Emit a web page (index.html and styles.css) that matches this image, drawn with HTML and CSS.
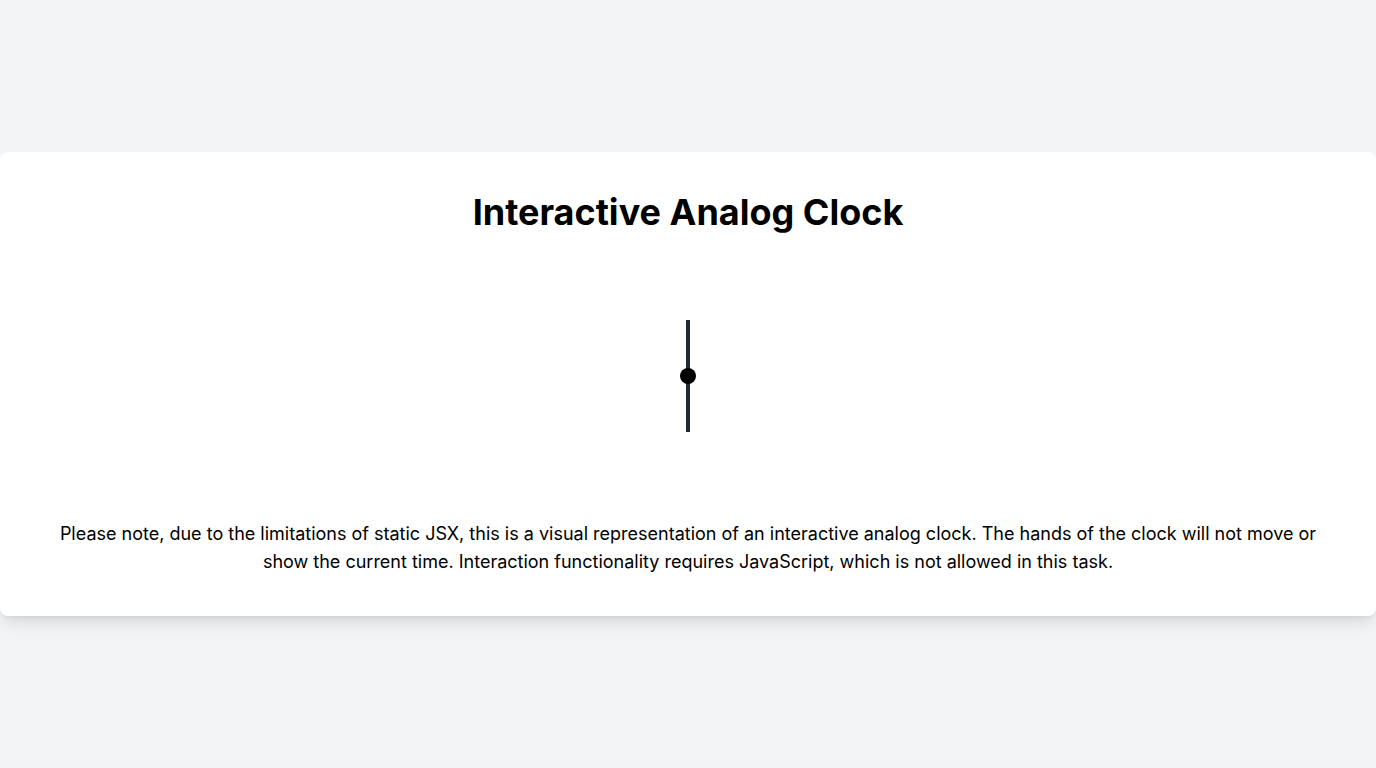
FILE: index.html
```html
<!DOCTYPE html>
<html>
<head>
<meta charset="utf-8">
<link rel="stylesheet" href="styles.css">
</head>
<body>
<div class="page">
  <div class="card">
    <h1 class="title">Interactive Analog Clock</h1>
    <div class="clock">
      <div class="hand hand-up"></div>
      <div class="hand hand-down"></div>
      <div class="pin"></div>
    </div>
    <p class="note">Please note, due to the limitations of static JSX, this is a visual representation of an interactive analog clock. The hands of the clock will not move or show the current time. Interaction functionality requires JavaScript, which is not allowed in this task.</p>
  </div>
</div>
</body>
</html>
```
FILE: styles.css
```css
html, body {
  margin: 0;
  padding: 0;
}
body {
  background: #f3f4f6;
  font-family: Inter, "Noto Sans", sans-serif;
  color: #000;
}
.page {
  min-height: 768px;
  display: flex;
  align-items: center;
  justify-content: center;
}
.card {
  width: 100%;
  box-sizing: border-box;
  background: #fff;
  border-radius: 8px;
  box-shadow: 0 10px 15px -3px rgba(0,0,0,0.1), 0 4px 6px -4px rgba(0,0,0,0.1);
  padding: 40px;
  display: flex;
  flex-direction: column;
  align-items: center;
}
.title {
  margin: 0;
  font-size: 36px;
  line-height: 40px;
  font-weight: 700;
  text-align: center;
}
.clock {
  position: relative;
  width: 256px;
  height: 256px;
  margin-top: 16px;
}
.hand {
  position: absolute;
  left: 126px;
  width: 4px;
  background: #1f2937;
}
.hand-up {
  top: 72px;
  height: 56px;
}
.hand-down {
  top: 128px;
  height: 56px;
}
.pin {
  position: absolute;
  left: 120px;
  top: 120px;
  width: 16px;
  height: 16px;
  border-radius: 50%;
  background: #000;
}
.note {
  margin: 16px 0 0;
  font-size: 18px;
  line-height: 28px;
  text-align: center;
}
```
